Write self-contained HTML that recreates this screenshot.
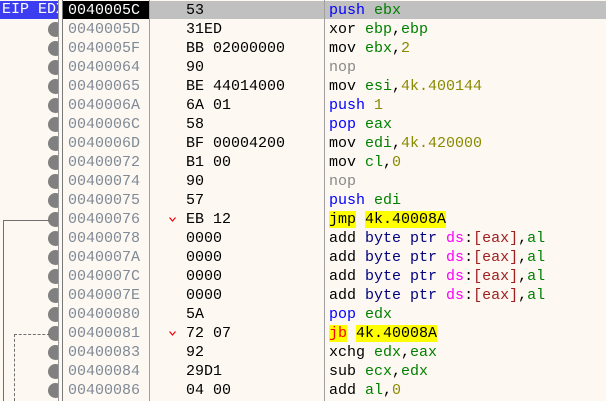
<!DOCTYPE html><html><head><style>
body{margin:0;width:606px;height:401px;overflow:hidden;background:#fdf8f2;font-family:"Liberation Mono",monospace;font-size:15px;position:relative}
.r{position:absolute;left:0;width:606px;height:19px;line-height:19px;white-space:pre}
.a{position:absolute;left:68px;color:#7f8a96}
.b{position:absolute;left:186px;color:#000}
.d{position:absolute;left:329px;color:#000}
.dot{position:absolute;left:48px;top:2px;width:15px;height:15px;border-radius:50%;background:#808080;clip-path:inset(0 5px 0 0)}
.k{color:#0000ff}.g{color:#008000}.n{color:#8a8a00}.o{color:#888}.m{color:#ff00ff}.br{color:#a02020}.p{color:#000080}
.y{background:#ffff00}.rd{color:#ff0000}
.ar{position:absolute;left:169px;top:7px;width:7px;height:5px}
</style></head><body>
<div style="position:absolute;left:150px;top:1px;width:456px;height:18px;background:#c0c0c0"></div>
<div style="position:absolute;left:0;top:1px;width:58px;height:18px;background:#3c3cf0;color:#fff;line-height:18px;white-space:pre;overflow:hidden;padding-left:2px;box-sizing:border-box">EIP EDX</div>
<div style="position:absolute;left:63px;top:1px;width:86px;height:18px;background:#000"></div>
<div id="rows"></div>
<div style="position:absolute;left:58px;top:0;width:5px;height:401px;background:#fdf8f2;border-left:1px solid #9a9a9a;border-right:1px solid #7a7a7a;box-sizing:border-box"></div>
<div style="position:absolute;left:149px;top:0;width:1px;height:401px;background:#a0a0a0"></div>
<div style="position:absolute;left:324px;top:0;width:1px;height:401px;background:#a0a0a0"></div>
<div style="position:absolute;left:3px;top:220px;width:47px;height:181px;border-left:1px solid #707070;border-top:1px solid #707070;box-sizing:border-box"></div>
<div style="position:absolute;left:14px;top:334px;width:36px;height:67px;border-left:1px dashed #707070;border-top:1px dashed #707070;box-sizing:border-box"></div>
<script>
var R=[
["0040005C","53",'<span class="k">push</span> <span class="g">ebx</span>'],
["0040005D","31ED",'xor <span class="g">ebp</span>,<span class="g">ebp</span>'],
["0040005F","BB 02000000",'mov <span class="g">ebx</span>,<span class="n">2</span>'],
["00400064","90",'<span class="o">nop</span>'],
["00400065","BE 44014000",'mov <span class="g">esi</span>,<span class="n">4k.400144</span>'],
["0040006A","6A 01",'<span class="k">push</span> <span class="n">1</span>'],
["0040006C","58",'<span class="k">pop</span> <span class="g">eax</span>'],
["0040006D","BF 00004200",'mov <span class="g">edi</span>,<span class="n">4k.420000</span>'],
["00400072","B1 00",'mov <span class="g">cl</span>,<span class="n">0</span>'],
["00400074","90",'<span class="o">nop</span>'],
["00400075","57",'<span class="k">push</span> <span class="g">edi</span>'],
["00400076","EB 12",'<span class="y">jmp</span> <span class="y">4k.40008A</span>',1],
["00400078","0000",'add <span class="p">byte ptr</span> <span class="m">ds</span>:<span class="br">[eax]</span>,<span class="g">al</span>'],
["0040007A","0000",'add <span class="p">byte ptr</span> <span class="m">ds</span>:<span class="br">[eax]</span>,<span class="g">al</span>'],
["0040007C","0000",'add <span class="p">byte ptr</span> <span class="m">ds</span>:<span class="br">[eax]</span>,<span class="g">al</span>'],
["0040007E","0000",'add <span class="p">byte ptr</span> <span class="m">ds</span>:<span class="br">[eax]</span>,<span class="g">al</span>'],
["00400080","5A",'<span class="k">pop</span> <span class="g">edx</span>'],
["00400081","72 07",'<span class="y rd">jb</span> <span class="y">4k.40008A</span>',1],
["00400083","92",'xchg <span class="g">edx</span>,<span class="g">eax</span>'],
["00400084","29D1",'sub <span class="g">ecx</span>,<span class="g">edx</span>'],
["00400086","04 00",'add <span class="g">al</span>,<span class="n">0</span>']];
var h='';R.forEach(function(r,i){h+='<div class="r" style="top:'+(1+19*i)+'px">'+(i?'<div class="dot"></div>':'')+'<span class="a"'+(i?'':' style="color:#fff"')+'>'+r[0]+'</span>'+(r[3]?'<svg class="ar" viewBox="0 0 7 5"><path d="M0.5 0.5L3.5 4L6.5 0.5" fill="none" stroke="#e00" stroke-width="1.2"/></svg>':'')+'<span class="b">'+r[1]+'</span><span class="d">'+r[2]+'</span></div>'});
document.getElementById('rows').innerHTML=h;
</script>
</body></html>
